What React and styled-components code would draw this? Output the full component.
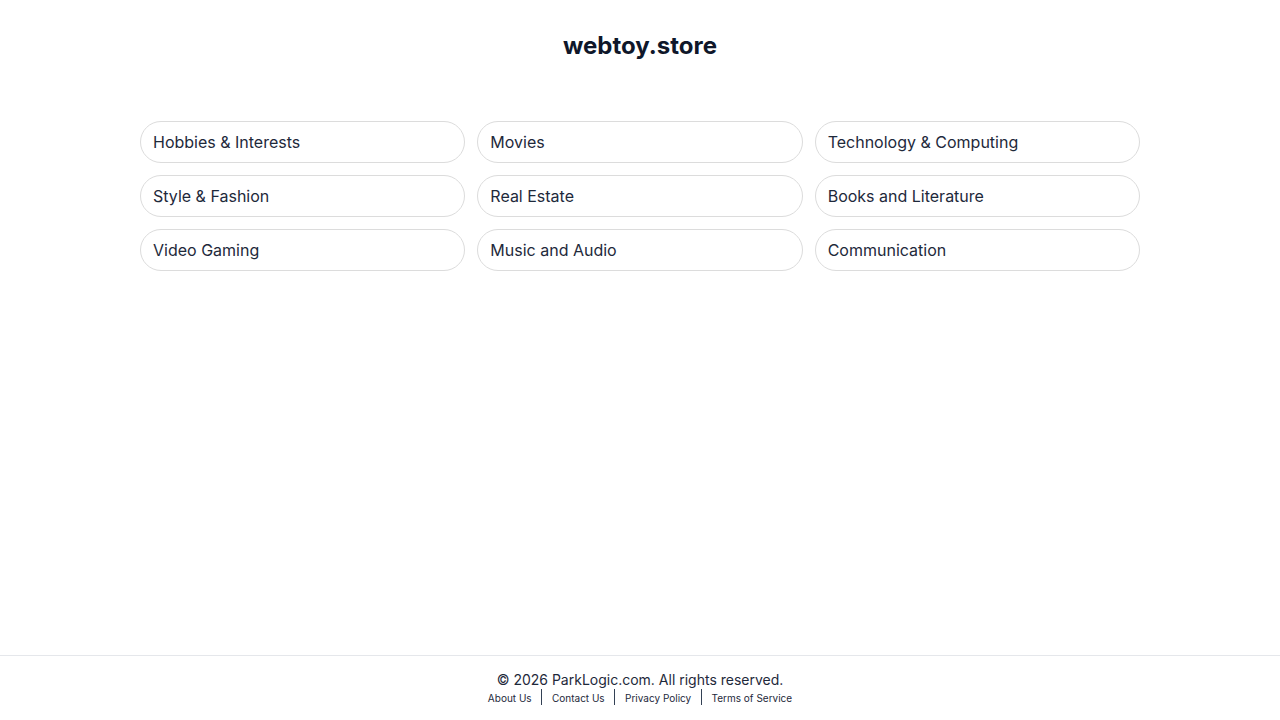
import styled, { createGlobalStyle } from 'styled-components';

const categories = [
  'Hobbies & Interests',
  'Movies',
  'Technology & Computing',
  'Style & Fashion',
  'Real Estate',
  'Books and Literature',
  'Video Gaming',
  'Music and Audio',
  'Communication',
];

const links = ['About Us', 'Contact Us', 'Privacy Policy', 'Terms of Service'];

export default function App() {
  return (
    <>
      <GlobalStyle />
      <Page>
        <Title>webtoy.store</Title>
        <Grid>
          {categories.map((name) => (
            <Pill href="#" key={name}>{name}</Pill>
          ))}
        </Grid>
        <Footer>
          <Copyright>© 2026 ParkLogic.com. All rights reserved.</Copyright>
          <FooterLinks>
            {links.map((link) => (
              <FooterLink href="#" key={link}>{link}</FooterLink>
            ))}
          </FooterLinks>
        </Footer>
      </Page>
    </>
  );
}

const GlobalStyle = createGlobalStyle`
  html, body {
    margin: 0;
    padding: 0;
    background: #fff;
  }
  body {
    font-family: Inter, "Liberation Sans", sans-serif;
    color: #0f172a;
  }
`;

const Page = styled.div`
  display: flex;
  flex-direction: column;
  min-height: 720px;
  box-sizing: border-box;
`;

const Title = styled.h1`
  margin: 0;
  padding-top: 30px;
  font-size: 24px;
  line-height: 32px;
  font-weight: 700;
  text-align: center;
  color: #0f172a;
`;

const Grid = styled.div`
  display: grid;
  grid-template-columns: repeat(3, 1fr);
  gap: 12px;
  width: 1000px;
  margin: 59px auto 0;
`;

const Pill = styled.a`
  display: flex;
  align-items: center;
  box-sizing: border-box;
  height: 42px;
  padding: 0 12px;
  border: 1px solid #dcdcdc;
  border-radius: 21px;
  font-size: 16px;
  color: #1e293b;
  text-decoration: none;
`;

const Footer = styled.footer`
  margin-top: auto;
  height: 65px;
  box-sizing: border-box;
  padding-top: 16px;
  border-top: 1px solid #e5e7eb;
  text-align: center;
`;

const Copyright = styled.div`
  font-size: 14px;
  line-height: 16px;
  color: #1e293b;
`;

const FooterLinks = styled.div`
  display: flex;
  justify-content: center;
  padding-top: 1px;
`;

const FooterLink = styled.a`
  padding: 2px 9.7px 0;
  font-size: 10px;
  line-height: 14px;
  color: #1e293b;
  text-decoration: none;
  border-left: 1px solid #334155;
  &:first-child {
    border-left: 0;
  }
`;
